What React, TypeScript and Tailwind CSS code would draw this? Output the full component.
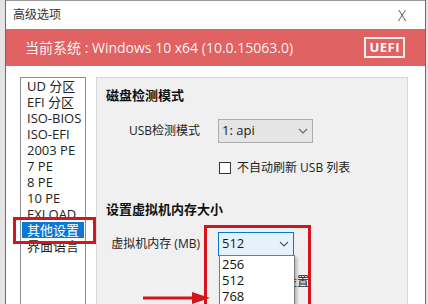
import React from 'react';

const items = ['UD 分区', 'EFI 分区', 'ISO-BIOS', 'ISO-EFI', '2003 PE', '7 PE', '8 PE', '10 PE', 'EXLOAD', '其他设置', '界面语言'];

const font = { fontFamily: '"Open Sans", "Noto Sans CJK SC", sans-serif' };

const Chevron = ({ className }: { className?: string }) => (
  <svg width="10" height="6" viewBox="0 0 10 6" className={className}>
    <path d="M1 1 L5 5 L9 1" fill="none" stroke="currentColor" strokeWidth="1.1" />
  </svg>
);

export default function App() {
  return (
    <div className="relative w-[428px] h-[304px] overflow-hidden bg-[#e4e4e4] text-[#1a1a1a]" style={font}>
      {/* dialog window */}
      <div className="ml-[5px] w-[421px] h-[304px] bg-white border-l border-r border-[#6b6b6b] flex flex-col">
        {/* title bar */}
        <div className="h-[29px] shrink-0 flex items-center justify-between pl-[7px] pr-[19px] border-t border-[#9a9a9a]">
          <span className="text-[12px] text-[#333]">高级选项</span>
          <span className="text-[15px] font-light text-[#333]">X</span>
        </div>

        {/* current system banner */}
        <div className="h-[37px] shrink-0 bg-[#e06262] flex items-center justify-between pl-[19px] pr-[20px]">
          <span className="text-[14px] text-white/95">当前系统 : Windows 10 x64 (10.0.15063.0)</span>
          <span className="border-2 border-white/90 text-white text-[13px] font-bold leading-none px-[3px] py-[2px] tracking-[0.5px]">UEFI</span>
        </div>

        {/* content */}
        <div className="flex gap-[10px] pt-[11px] pl-[14px]">
          {/* category list */}
          <div className="w-[66px] h-[240px] shrink-0 border border-[#8a8f96] bg-white">
            {items.map((it) =>
              it === '其他设置' ? (
                <div key={it} className="h-[16px] mx-[1px] bg-[#0a78d4] text-white text-[13px] leading-[16px] pl-[5px] overflow-hidden whitespace-nowrap">
                  {it}
                </div>
              ) : (
                <div key={it} className="h-[16px] text-[13px] leading-[16px] pl-[6px] text-[#222] overflow-hidden whitespace-nowrap">
                  {it}
                </div>
              )
            )}
          </div>

          {/* settings group */}
          <div className="w-[312px] h-[240px] shrink-0 border border-[#d8d8d8] bg-[#f0f0f0] flex flex-col">
            <div className="mt-[7px] pl-[9px] h-[20px] leading-[20px] text-[13px] font-bold text-[#111]">磁盘检测模式</div>

            <div className="mt-[14px] flex items-center h-[24px]">
              <div className="w-[103px] text-right text-[12px] text-[#222]">USB检测模式</div>
              <div className="ml-[18px] w-[95px] h-[24px] bg-[#e5e5e5] border border-[#adadad] flex items-center justify-between pl-[3px] pr-[4px]">
                <span className="text-[13px]">1: api</span>
                <Chevron className="text-[#666]" />
              </div>
            </div>

            <div className="mt-[17px] flex items-center h-[16px] pl-[122px]">
              <div className="w-[12px] h-[12px] border border-[#333] bg-white" />
              <span className="ml-[6px] text-[12px] text-[#222]">不自动刷新 USB 列表</span>
            </div>

            <div className="mt-[23px] pl-[9px] h-[20px] leading-[20px] text-[13px] font-bold text-[#111]">设置虚拟机内存大小</div>

            <div className="mt-[13px] flex items-center h-[24px]">
              <div className="w-[103px] text-right text-[12px] text-[#222]">虚拟机内存 (MB)</div>
              <div className="ml-[18px] w-[76px] h-[24px] bg-[#e5f1fb] border border-[#0078d7] flex items-center justify-between pl-[3px] pr-[4px]">
                <span className="text-[13px]">512</span>
                <Chevron className="text-[#555]" />
              </div>
            </div>

            <div className="mt-[18px] flex items-center h-[16px] pl-[122px]">
              <div className="w-[12px] h-[12px] border border-[#333] bg-white" />
              <span className="ml-[6px] text-[12px] text-[#222]">不使用此设置</span>
            </div>
          </div>
        </div>
      </div>

      {/* open dropdown list */}
      <div className="absolute left-[219px] top-[255px] w-[76px] h-[60px] bg-white border border-[#7a7a7a] shadow-[2px_2px_3px_rgba(0,0,0,0.25)]">
        {['256', '512', '768'].map((v) => (
          <div key={v} className="h-[16px] leading-[16px] text-[13px] pl-[2px] text-[#111]">{v}</div>
        ))}
      </div>

      {/* red annotation boxes */}
      <div className="absolute left-[13px] top-[217px] w-[83px] h-[27px] border-[3px] border-[#d4161c]" />
      <div className="absolute left-[204px] top-[225px] w-[107px] h-[90px] border-[3px] border-[#d4161c]" />

      {/* red arrow */}
      <svg className="absolute left-[140px] top-[290px]" width="72" height="16" viewBox="0 0 72 16">
        <path d="M3 8 L56 8" stroke="#d4161c" strokeWidth="3" />
        <path d="M52 2 L70 8 L52 14 Z" fill="#d4161c" />
      </svg>
    </div>
  );
}
